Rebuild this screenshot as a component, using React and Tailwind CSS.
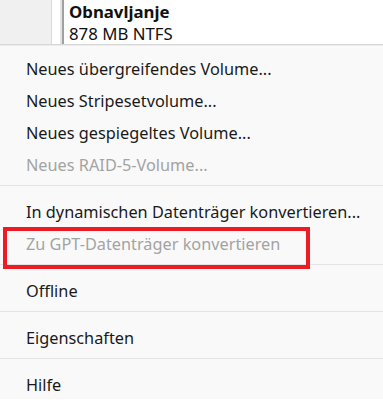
import React from 'react';

const groups = [
  [
    { label: 'Neues übergreifendes Volume...' },
    { label: 'Neues Stripesetvolume...' },
    { label: 'Neues gespiegeltes Volume...' },
    { label: 'Neues RAID-5-Volume...', disabled: true },
  ],
  [
    { label: 'In dynamischen Datenträger konvertieren...' },
    { label: 'Zu GPT-Datenträger konvertieren', disabled: true },
  ],
  [{ label: 'Offline' }],
  [{ label: 'Eigenschaften' }],
  [{ label: 'Hilfe' }],
];

const Item = ({ label, disabled }) => (
  <div
    className={`h-[32px] flex items-center pl-[26px] text-[16.3px] whitespace-nowrap ${
      disabled ? 'text-[#a3a3a3]' : 'text-[#1a1a1a]'
    }`}
  >
    {label}
  </div>
);

const Separator = () => (
  <div className="h-[15px] pt-[4px]">
    <div className="h-px bg-[#e3e3e3]" />
  </div>
);

export default function App() {
  return (
    <div className="w-[383px] h-[420px] bg-white overflow-hidden relative" style={{ fontFamily: '"Noto Sans", "Open Sans", sans-serif' }}>
      {/* disk panel behind the menu */}
      <div className="h-[44px] flex">
        <div className="w-[51px] bg-[#f0f0f0]" />
        <div className="w-px bg-[#dadada]" />
        <div className="w-[8px] bg-white" />
        <div className="w-[2px] bg-[#e2e2e2]" />
        <div className="w-[2px] bg-[#a0a0a0]" />
        <div className="flex-1 pl-[5px] pt-px leading-[22px] text-[16.8px] text-[#111]">
          <div className="font-bold">Obnavljanje</div>
          <div>878 MB NTFS</div>
        </div>
      </div>

      {/* context menu */}
      <div className="h-[355px] bg-[#f9f9f9] overflow-hidden">
        <div className="h-px bg-[#d6d6d6]" />
        <div className="h-px bg-[#ececec]" />
        <div className="pt-[7px]">
          {groups.map((g, i) => (
            <div key={i}>
              {i > 0 && <Separator />}
              {g.map((it) => (
                <Item key={it.label} {...it} />
              ))}
            </div>
          ))}
        </div>
      </div>

      {/* highlight box */}
      <div className="absolute left-[3px] top-[227px] w-[307px] h-[42px] border-[4px] border-[#ed1c24]" />
    </div>
  );
}
